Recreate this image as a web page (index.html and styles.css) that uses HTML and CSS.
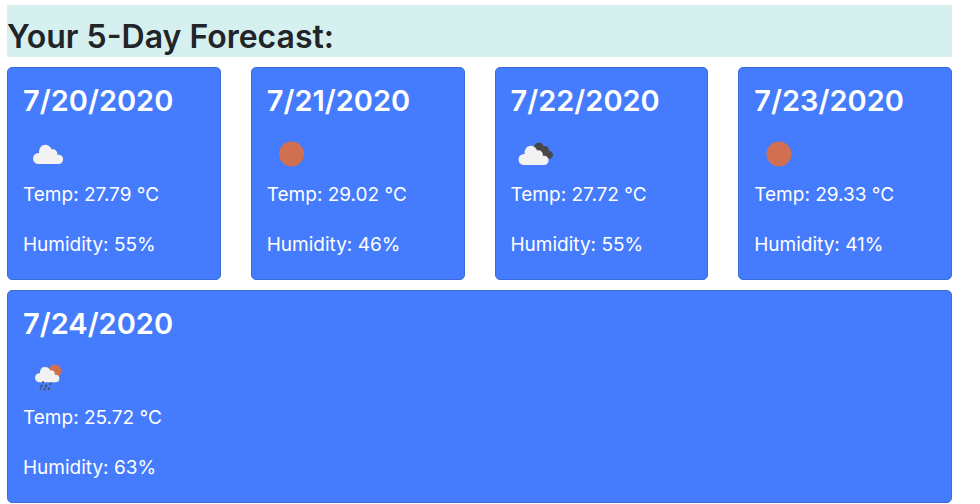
FILE: index.html
```html
<!DOCTYPE html>
<html lang="en">
<head>
<meta charset="utf-8">
<title>Your 5-Day Forecast</title>
<link rel="stylesheet" href="styles.css">
</head>
<body>
<main>
  <h1 class="title">Your 5-Day Forecast:</h1>
  <div class="forecast">
    <section class="card">
      <h2 class="date">7/20/2020</h2>
      <svg class="icon" viewBox="0 0 50 50" role="img" aria-label="Cloudy">
        <path fill="#f2f2f2" d="M15.500 35a5.500 5.500 0 0 1 0-11h.8a6.300 6.300 0 0 1 12.300-3.500 4.400 4.400 0 0 1 5.700 5.200h1.200a4.650 4.650 0 0 1 0 9.300z"/>
      </svg>
      <p class="reading">Temp: 27.79 °C</p>
      <p class="reading">Humidity: 55%</p>
    </section>
    <section class="card">
      <h2 class="date">7/21/2020</h2>
      <svg class="icon" viewBox="0 0 50 50" role="img" aria-label="Clear">
        <circle cx="24.5" cy="25" r="12.5" fill="#d07050"/>
      </svg>
      <p class="reading">Temp: 29.02 °C</p>
      <p class="reading">Humidity: 46%</p>
    </section>
    <section class="card">
      <h2 class="date">7/22/2020</h2>
      <svg class="icon" viewBox="0 0 50 50" role="img" aria-label="Broken clouds">
        <path fill="#484848" d="M23 18.500a4.900 4.900 0 0 1 9.600-1.200 4 4 0 0 1 5.200 4.700 3.900 3.900 0 1 1-1.200 7.500H30z"/>
        <path fill="#f2f2f2" d="M13 36a5.500 5.500 0 0 1 0-11h.8a6.300 6.300 0 0 1 12.300-3.500 4.400 4.400 0 0 1 5.700 5.200h1.200a4.650 4.650 0 0 1 0 9.300z"/>
      </svg>
      <p class="reading">Temp: 27.72 °C</p>
      <p class="reading">Humidity: 55%</p>
    </section>
    <section class="card">
      <h2 class="date">7/23/2020</h2>
      <svg class="icon" viewBox="0 0 50 50" role="img" aria-label="Clear">
        <circle cx="25" cy="25" r="12.5" fill="#d07050"/>
      </svg>
      <p class="reading">Temp: 29.33 °C</p>
      <p class="reading">Humidity: 41%</p>
    </section>
    <section class="card wide">
      <h2 class="date">7/24/2020</h2>
      <svg class="icon" viewBox="0 0 50 50" role="img" aria-label="Rain with sun">
        <circle cx="32" cy="19" r="6.500" fill="#d07050"/>
        <path fill="#f2f2f2" d="M16.500 30.300a4.500 4.500 0 0 1 0-9h.5a5.300 5.300 0 0 1 10.200-2.800 3.700 3.700 0 0 1 4.600 4.300h.8a3.750 3.750 0 0 1 0 7.500z"/>
        <path fill="none" stroke="#484848" stroke-width="1.700" stroke-linecap="round" d="M20 29.800v.4M27.500 31.600l-.2.600M18.600 33.600l-.5.900M23.300 33.300l-.5 1.200M17.500 36.700l-.1.300M21.700 37l-.3.600M26 36.300l-.4.900"/>
      </svg>
      <p class="reading">Temp: 25.72 °C</p>
      <p class="reading">Humidity: 63%</p>
    </section>
  </div>
</main>
</body>
</html>
```
FILE: styles.css
```css
* { box-sizing: border-box; }

body {
  margin: 0;
  background: #fff;
  color: #212529;
  font-family: Inter, "Liberation Sans", sans-serif;
}

main { padding: 5px 28px 0 7px; }

.title {
  margin: 0 0 10px;
  padding-top: 12px;
  background: #d5f0ee;
  font-size: 32px;
  line-height: 40px;
  font-weight: 600;
}

.forecast {
  display: grid;
  grid-template-columns: repeat(4, 1fr);
  gap: 10px 30px;
}

.card {
  padding: 15px 15px 0;
  border: 1px solid #3d6ddb;
  border-radius: 5px;
  background: #457bfd;
  color: #fff;
}

.wide { grid-column: 1 / -1; }

.date {
  margin: 0 0 10px;
  font-size: 29px;
  line-height: 36px;
  font-weight: 600;
}

.icon {
  display: block;
  width: 50px;
  height: 50px;
}

.reading {
  margin: 0 0 18px;
  font-size: 19px;
  line-height: 32px;
}
```
